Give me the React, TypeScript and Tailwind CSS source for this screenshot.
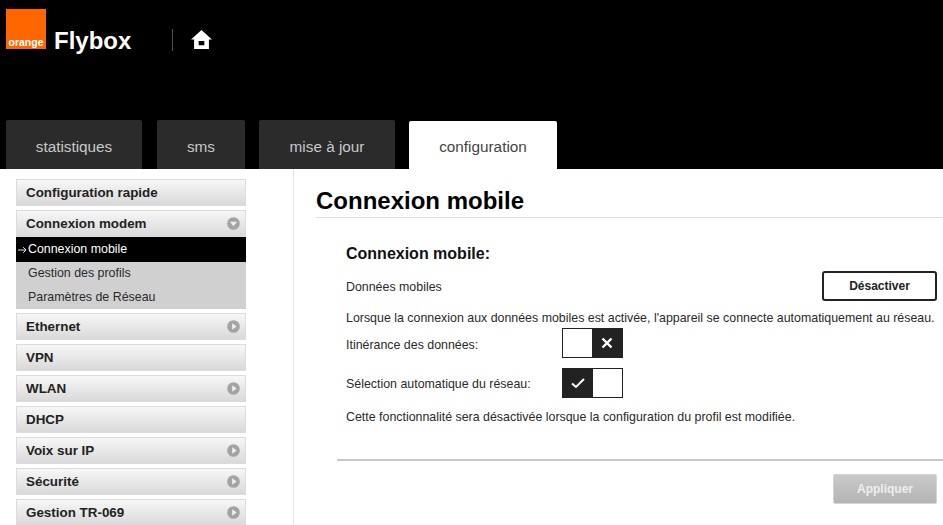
const tabs = [
  { label: "statistiques", width: "w-[136px]", margin: "ml-[6px]" },
  { label: "sms", width: "w-[88px]", margin: "ml-[15px]" },
  { label: "mise à jour", width: "w-[136px]", margin: "ml-[14px]" },
];

const menuAfter = [
  { label: "Ethernet", icon: "right" },
  { label: "VPN", icon: "none" },
  { label: "WLAN", icon: "right" },
  { label: "DHCP", icon: "none" },
  { label: "Voix sur IP", icon: "right" },
  { label: "Sécurité", icon: "right" },
  { label: "Gestion TR-069", icon: "right" },
];

function MenuArrow({ dir }: { dir: string }) {
  if (dir === "none") return null;
  return (
    <svg width="13" height="13" viewBox="0 0 14 14" className="shrink-0">
      <circle cx="7" cy="7" r="6.800" fill="#a3a3a3" />
      {dir === "right" ? <path d="M5.600 3.400 10.400 7l-4.800 3.600z" fill="#f0f0f0" /> : <path d="M3.200 5.200h7.600L7 10z" fill="#f0f0f0" />}
    </svg>
  );
}

function MenuItem({ label, icon, height = "h-[27px]" }: { label: string; icon: string; height?: string }) {
  return (
    <div className={`${height} flex items-center justify-between pl-[9px] pr-[5px] border border-[#dcdcdc] bg-gradient-to-b from-[#f7f7f7] to-[#d9d9d9] text-[13.400px] font-bold text-[#222]`}>
      <span className="pt-[1px]">{label}</span>
      <MenuArrow dir={icon} />
    </div>
  );
}

function Toggle({ on }: { on: boolean }) {
  return (
    <div className="w-[61px] h-[30px] flex border border-[#222] bg-white">
      {on && (
        <div className="w-[30px] bg-[#222] flex items-center justify-center">
          <svg width="16" height="12" viewBox="0 0 16 12" fill="none" stroke="#fff" strokeWidth="2">
            <path d="m2 6.500 4 3.500 8-8" />
          </svg>
        </div>
      )}
      <div className="flex-1" />
      {!on && (
        <div className="w-[30px] bg-[#222] flex items-center justify-center">
          <svg width="12" height="12" viewBox="0 0 12 12" fill="none" stroke="#fff" strokeWidth="2.400">
            <path d="m1.500 1.500 9 9m0-9-9 9" />
          </svg>
        </div>
      )}
    </div>
  );
}

export default function App() {
  return (
    <div className="w-[943px] h-[525px] overflow-hidden bg-white font-['Liberation_Sans',Arial,sans-serif] text-[#2a2a2a]">
      <header className="h-[169px] bg-black flex flex-col justify-between">
        <div className="flex items-start pt-[9px] pl-[6px]">
          <div className="w-[40px] h-[40px] bg-[#ff6600] flex items-end justify-center">
            <span className="text-white text-[10.500px] leading-[13px] font-bold">orange</span>
          </div>
          <span className="ml-[8px] mt-[18px] w-[118px] text-white text-[24px] leading-[28px] font-bold">Flybox</span>
          <div className="mt-[20px] w-px h-[22px] bg-[#5a4a48]" />
          <svg width="21" height="19" viewBox="0 0 22 20" className="ml-[18px] mt-[21px]" fill="#fff">
            <path d="M11 0 0 10h3.200v10h15.600V10H22L11 0zm-3 11.500h6V16H8z" fillRule="evenodd" />
          </svg>
        </div>
        <nav className="flex items-end">
          {tabs.map((t) => (
            <div
              key={t.label}
              className={`${t.width} ${t.margin} h-[49px] rounded-t-[2px] bg-[#2b2b2b] text-[#c8c8c8] text-[15.300px] flex items-center justify-center pt-[5px]`}
            >
              {t.label}
            </div>
          ))}
          <div className="w-[148px] ml-[14px] h-[48px] rounded-t-[2px] bg-white text-[#444] text-[15.300px] flex items-center justify-center pt-[4px]">
            configuration
          </div>
        </nav>
      </header>
      <div className="flex h-[356px]">
        <aside className="w-[294px] shrink-0 border-r border-[#e2e2e2] pt-[10px] pl-[16px] pr-[47px]">
          <div className="flex flex-col gap-[4px]">
            <MenuItem label="Configuration rapide" icon="none" />
            <div>
              <MenuItem label="Connexion modem" icon="down" />
              <div className="bg-[#d0d0d0] text-[12.400px]">
                <div className="h-[25px] bg-black text-white flex items-center pl-[2px] gap-[1px]">
                  <svg width="9" height="8" viewBox="0 0 9 8" fill="none" stroke="#fff" strokeWidth="0.900">
                    <path d="M0 4h8M5.200 1.200 8 4 5.200 6.800" />
                  </svg>
                  <span>Connexion mobile</span>
                </div>
                <div className="h-[23px] pb-[1px] flex items-center pl-[12px]">Gestion des profils</div>
                <div className="h-[24px] flex items-center pl-[12px]">Paramètres de Réseau</div>
              </div>
            </div>
            {menuAfter.map((m) => (
              <MenuItem key={m.label} {...m} />
            ))}
          </div>
        </aside>
        <main className="flex-1 min-w-0">
          <div className="ml-[22px] h-[49px] border-b border-[#dfdfdf] pt-[18px]">
            <h1 className="text-[24px] leading-[28px] font-bold text-black whitespace-nowrap">Connexion mobile</h1>
          </div>
          <div className="pl-[52px] pr-[6px] pt-[27px] text-[12.400px]">
            <h2 className="text-[16px] leading-[18px] font-bold text-[#111]">Connexion mobile:</h2>
            <div className="mt-[8px] h-[30px] flex items-center justify-between">
              <span className="pt-[3px]">Données mobiles</span>
              <div className="w-[115px] h-[30px] border-2 border-[#222] rounded-[3px] flex items-center justify-center text-[12px] font-bold text-[#222]">
                Désactiver
              </div>
            </div>
            <p className="mt-[10px] leading-[14px] whitespace-nowrap">
              Lorsque la connexion aux données mobiles est activée, l'appareil se connecte automatiquement au réseau.
            </p>
            <div className="mt-[3px] h-[30px] flex items-center">
              <span className="w-[216px] shrink-0 pt-[5px]">Itinérance des données:</span>
              <Toggle on={false} />
            </div>
            <div className="mt-[10px] h-[30px] flex items-center">
              <span className="w-[216px] shrink-0 pt-[2px]">Sélection automatique du réseau:</span>
              <Toggle on={true} />
            </div>
            <p className="mt-[12px] leading-[14px] whitespace-nowrap">
              Cette fonctionnalité sera désactivée lorsque la configuration du profil est modifiée.
            </p>
          </div>
          <div className="ml-[43px] mt-[35px] h-[2px] bg-[#c8c8c8]" />
          <div className="flex justify-end pr-[6px] mt-[13px]">
            <div className="w-[104px] h-[30px] rounded-[2px] bg-gradient-to-b from-[#c9c9c9] to-[#b4b4b4] border border-[#d4d4d4] text-[#eee] text-[12px] font-bold flex items-center justify-center">
              Appliquer
            </div>
          </div>
        </main>
      </div>
    </div>
  );
}
